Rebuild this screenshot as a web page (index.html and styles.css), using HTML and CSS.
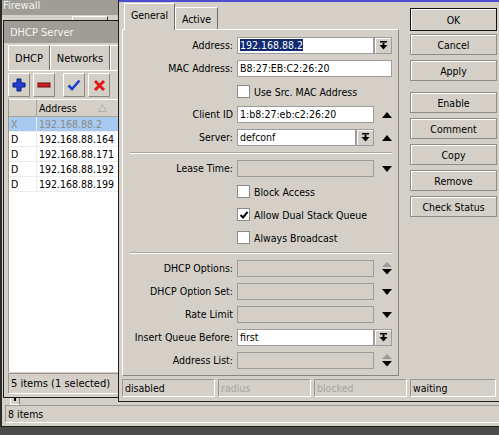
FILE: index.html
```html
<!DOCTYPE html>
<html lang="en">
<head>
    <meta charset="UTF-8">
    <meta name="viewport" content="width=device-width, initial-scale=1.0">
    <title>DHCP Lease</title>
    <link rel="stylesheet" href="styles.css">
</head>
<body>
    <div class="desktop">

        <!-- Firewall window (behind) -->
        <div class="window firewall">
            <div class="titlebar">Firewall</div>
            <div class="fw-tabs"><span class="fw-tab"></span></div>
            <div class="fw-fill"></div>
            <div class="fw-scroll"><span class="mini-btn"></span></div>
            <div class="statusbar">
                <span class="cell fw-count">8 items</span>
            </div>
        </div>

        <!-- DHCP Server window -->
        <div class="window dhcp">
            <div class="titlebar">DHCP Server</div>
            <div class="dhcp-body">
                <div class="tabs dhcp-tabs">
                    <span class="tab">DHCP</span>
                    <span class="tab">Networks</span>
                    <span class="tab">Leases</span>
                </div>
                <div class="dhcp-panel">
                    <div class="toolbar">
                        <button class="tool">
                            <svg width="14" height="14" viewBox="0 0 14 14"><path d="M5 1h4v4h4v4H9v4H5V9H1V5h4z" fill="#1f3fe0" stroke="#0d1d70" stroke-width="1"/></svg>
                        </button>
                        <button class="tool">
                            <svg width="14" height="6" viewBox="0 0 14 6"><rect x="1" y="1" width="12" height="4" fill="#d42020" stroke="#6a1010" stroke-width="1"/></svg>
                        </button>
                        <button class="tool gap">
                            <svg width="14" height="12" viewBox="0 0 14 12"><path d="M1.5 6.5l3.5 3.5 7.5-8.5" fill="none" stroke="#1f3fd0" stroke-width="2.6"/></svg>
                        </button>
                        <button class="tool">
                            <svg width="13" height="13" viewBox="0 0 13 13"><path d="M2 2l9 9M11 2l-9 9" stroke="#e01818" stroke-width="3"/></svg>
                        </button>
                    </div>
                    <div class="list">
                        <div class="list-row head">
                            <span class="col-flag"></span>
                            <span class="col-addr">Address <svg class="sort" width="9" height="8" viewBox="0 0 9 8"><path d="M4.5 0.5L8.5 7.5H0.5z" fill="none" stroke="#b0b0b0"/></svg></span>
                        </div>
                        <div class="list-row selected disabled">
                            <span class="col-flag">X</span>
                            <span class="col-addr">192.168.88.2</span>
                        </div>
                        <div class="list-row">
                            <span class="col-flag">D</span>
                            <span class="col-addr">192.168.88.164</span>
                        </div>
                        <div class="list-row">
                            <span class="col-flag">D</span>
                            <span class="col-addr">192.168.88.171</span>
                        </div>
                        <div class="list-row">
                            <span class="col-flag">D</span>
                            <span class="col-addr">192.168.88.192</span>
                        </div>
                        <div class="list-row">
                            <span class="col-flag">D</span>
                            <span class="col-addr">192.168.88.199</span>
                        </div>
                    </div>
                    <div class="cell list-status">5 items (1 selected)</div>
                </div>
            </div>
        </div>

        <!-- DHCP Lease dialog (active) -->
        <div class="window lease">
            <div class="titlebar active"></div>
            <div class="lease-body">
                <div class="lease-main">
                    <div class="tabs lease-tabs">
                        <span class="tab current">General</span>
                        <span class="tab">Active</span>
                    </div>
                    <div class="panel form">
                        <div class="lbl">Address:</div>
                        <div class="field">
                            <span class="input"><span class="sel">192.168.88.2</span></span>
                            <span class="dd"><svg width="9" height="9" viewBox="0 0 9 9"><rect x="1" y="0" width="7" height="1.5"/><rect x="3.5" y="1.5" width="2" height="2.5"/><path d="M0.5 4h8L4.5 8.5z"/></svg></span>
                        </div>

                        <div class="lbl">MAC Address:</div>
                        <div class="field"><span class="input">B8:27:EB:C2:26:20</span></div>

                        <div class="lbl"></div>
                        <div class="field check"><span class="box"></span>Use Src. MAC Address</div>

                        <div class="lbl">Client ID</div>
                        <div class="field">
                            <span class="input">1:b8:27:eb:c2:26:20</span>
                            <span class="slot"><svg width="10" height="6" viewBox="0 0 10 6"><path d="M0 6h10L5 0z"/></svg></span>
                        </div>

                        <div class="lbl">Server:</div>
                        <div class="field">
                            <span class="input">defconf</span>
                            <span class="dd"><svg width="9" height="9" viewBox="0 0 9 9"><rect x="1" y="0" width="7" height="1.5"/><rect x="3.5" y="1.5" width="2" height="2.5"/><path d="M0.5 4h8L4.5 8.5z"/></svg></span>
                            <span class="slot"><svg width="10" height="6" viewBox="0 0 10 6"><path d="M0 6h10L5 0z"/></svg></span>
                        </div>

                        <div class="sep"></div>

                        <div class="lbl">Lease Time:</div>
                        <div class="field">
                            <span class="input off"></span>
                            <span class="slot"><svg width="10" height="6" viewBox="0 0 10 6"><path d="M0 0h10L5 6z"/></svg></span>
                        </div>

                        <div class="lbl"></div>
                        <div class="field check"><span class="box"></span>Block Access</div>

                        <div class="lbl"></div>
                        <div class="field check"><span class="box"><svg width="10" height="10" viewBox="0 0 10 10"><path d="M1.5 5l2.5 2.5L8.5 2" fill="none" stroke="#000" stroke-width="2"/></svg></span>Allow Dual Stack Queue</div>

                        <div class="lbl"></div>
                        <div class="field check"><span class="box"></span>Always Broadcast</div>

                        <div class="sep"></div>

                        <div class="lbl">DHCP Options:</div>
                        <div class="field">
                            <span class="input off"></span>
                            <span class="slot"><svg width="10" height="13" viewBox="0 0 10 13"><path d="M0 5h10L5 0z" fill="#9a9a9a"/><path d="M0 7h10L5 12.5z"/></svg></span>
                        </div>

                        <div class="lbl">DHCP Option Set:</div>
                        <div class="field">
                            <span class="input off"></span>
                            <span class="slot"><svg width="10" height="6" viewBox="0 0 10 6"><path d="M0 0h10L5 6z"/></svg></span>
                        </div>

                        <div class="lbl">Rate Limit</div>
                        <div class="field">
                            <span class="input off"></span>
                            <span class="slot"><svg width="10" height="6" viewBox="0 0 10 6"><path d="M0 0h10L5 6z"/></svg></span>
                        </div>

                        <div class="lbl">Insert Queue Before:</div>
                        <div class="field">
                            <span class="input">first</span>
                            <span class="dd"><svg width="9" height="9" viewBox="0 0 9 9"><rect x="1" y="0" width="7" height="1.5"/><rect x="3.5" y="1.5" width="2" height="2.5"/><path d="M0.5 4h8L4.5 8.5z"/></svg></span>
                        </div>

                        <div class="lbl">Address List:</div>
                        <div class="field">
                            <span class="input off"></span>
                            <span class="slot"><svg width="10" height="13" viewBox="0 0 10 13"><path d="M0 5h10L5 0z" fill="#9a9a9a"/><path d="M0 7h10L5 12.5z"/></svg></span>
                        </div>
                    </div>
                </div>
                <div class="actions">
                    <button class="btn default">OK</button>
                    <button class="btn">Cancel</button>
                    <button class="btn">Apply</button>
                    <button class="btn spaced">Enable</button>
                    <button class="btn">Comment</button>
                    <button class="btn">Copy</button>
                    <button class="btn">Remove</button>
                    <button class="btn">Check Status</button>
                </div>
            </div>
            <div class="statusbar lease-status">
                <span class="cell">disabled</span>
                <span class="cell muted">radius</span>
                <span class="cell muted">blocked</span>
                <span class="cell">waiting</span>
            </div>
        </div>

    </div>
</body>
</html>
```

FILE: styles.css
```css
* {
    box-sizing: border-box;
}
body {
    margin: 0;
    background-color: #4b4b4b;
    font-family: "DejaVu Sans Condensed", "DejaVu Sans", sans-serif;
    font-size: 10.5px;
    color: #000;
    overflow: hidden;
}
.desktop {
    position: relative;
    width: 499px;
    height: 435px;
    overflow: hidden;
}
.window {
    position: absolute;
    background-color: #d4d0c8;
    border: 1px solid #1e1e1e;
}
.titlebar {
    background-color: #a09d97;
    color: #f4f4f4;
    font-size: 11px;
    display: flex;
    align-items: center;
}
.titlebar.active {
    background-color: #4e4ed2;
}

/* Firewall */
.firewall {
    left: 0;
    top: -6px;
    width: 530px;
    height: 433px;
    display: flex;
    flex-direction: column;
    border-left: 2px solid #2a2a2a;
}
.firewall .titlebar {
    height: 20px;
    padding-left: 1px;
}
.fw-tabs {
    height: 20px;
    padding: 1px 0 0 70px;
}
.fw-tab {
    display: block;
    width: 36px;
    height: 19px;
    border-top: 1px solid #fff;
    border-left: 1px solid #fff;
    border-right: 1px solid #404040;
}
.fw-fill {
    flex-grow: 1;
}
.fw-scroll {
    height: 8px;
    padding-left: 8px;
}
.mini-btn {
    display: block;
    width: 10px;
    height: 8px;
    border: 1px solid #fff;
    border-top: none;
    border-right-color: #808080;
    position: relative;
}
.mini-btn::after {
    content: "";
    position: absolute;
    left: 3px;
    top: 0;
    width: 2px;
    height: 4px;
    background: #000;
}
.statusbar {
    display: flex;
    gap: 3px;
    height: 18px;
    margin: 0 0 3px 3px;
}
.cell {
    display: flex;
    align-items: center;
    padding-left: 2px;
    border: 1px solid;
    border-color: #9a9790 #fff #fff #9a9790;
    white-space: nowrap;
}
.cell.muted {
    color: #a8a69f;
}
.fw-count {
    width: 520px;
}

/* DHCP Server */
.dhcp {
    left: 3px;
    top: 20px;
    width: 160px;
    height: 378px;
}
.dhcp .titlebar {
    height: 22px;
    padding-left: 6px;
}
.dhcp-body {
    padding: 2px 0 0 4px;
}
.tabs {
    display: flex;
    align-items: flex-end;
}
.tab {
    display: flex;
    align-items: center;
    justify-content: center;
    border-top: 1px solid #fff;
    border-left: 1px solid #fff;
    border-right: 1px solid #6e6e6e;
    white-space: nowrap;
}
.dhcp-tabs {
    height: 25px;
}
.dhcp-tabs .tab {
    height: 25px;
    font-size: 11px;
}
.dhcp-tabs .tab:nth-child(1) {
    width: 42px;
}
.dhcp-tabs .tab:nth-child(2) {
    width: 60px;
}
.dhcp-tabs .tab:nth-child(3) {
    width: 50px;
}
.dhcp-panel {
    border-top: 1px solid #fff;
    padding-top: 2px;
}
.toolbar {
    display: flex;
    gap: 3px;
    height: 24px;
}
.tool {
    width: 22px;
    height: 24px;
    padding: 0;
    display: flex;
    align-items: center;
    justify-content: center;
    background-color: #d4d0c8;
    border: 1px solid;
    border-color: #fff #8a8780 #8a8780 #fff;
}
.tool.gap {
    margin-left: 5px;
}
.list {
    margin-top: 2px;
    height: 273px;
    background-color: #fff;
    border-left: 1px solid #9a9790;
}
.list-row {
    display: flex;
    height: 15px;
    align-items: center;
    border-bottom: 1px solid #ececec;
}
.list-row.head {
    height: 18px;
    background-color: #d4d0c8;
    border-top: 1px solid #fff;
    border-bottom: 1px solid #a8a59e;
}
.col-flag {
    width: 28px;
    height: 100%;
    display: flex;
    align-items: center;
    padding-left: 2px;
    border-right: 1px solid #ececec;
}
.head .col-flag {
    border-right: 1px solid #a8a59e;
}
.col-addr {
    flex-grow: 1;
    padding-left: 2px;
    display: flex;
    align-items: center;
}
.sort {
    margin-left: 21px;
}
.list-row.selected {
    background-color: #a6caf0;
}
.list-row.disabled {
    color: #8a8a8a;
}
.list-status {
    margin-top: 1px;
    height: 21px;
    width: 150px;
    font-size: 11px;
}

/* DHCP Lease dialog */
.lease {
    left: 118px;
    top: -22px;
    width: 400px;
}
.lease .titlebar {
    height: 23px;
}
.lease-body {
    display: flex;
    padding: 1px 0 0 3px;
}
.lease-main {
    width: 277px;
}
.lease-tabs {
    height: 26px;
    padding-left: 2px;
    position: relative;
    z-index: 1;
}
.lease-tabs .tab {
    height: 22px;
    width: 43px;
}
.lease-tabs .tab.current {
    height: 27px;
    width: 51px;
    margin-bottom: -1px;
    background-color: #d4d0c8;
    padding-bottom: 4px;
}
.panel {
    height: 347px;
    border: 1px solid;
    border-color: #fff #8a8780 #8a8780 #fff;
}
.form {
    display: grid;
    grid-template-columns: 110px 155px;
    column-gap: 4px;
    row-gap: 6px;
    align-content: start;
    padding-top: 7px;
}
.lbl {
    height: 17px;
    line-height: 17px;
    text-align: right;
    white-space: nowrap;
}
.field {
    display: flex;
    height: 17px;
}
.input {
    flex-grow: 1;
    height: 17px;
    line-height: 15px;
    padding-left: 2px;
    background-color: #fff;
    border: 1px solid #9c9c9c;
    white-space: nowrap;
    overflow: hidden;
}
.input.off {
    background-color: #d4d0c8;
}
.sel {
    background-color: #0f2a6e;
    color: #fff;
}
.dd {
    width: 18px;
    height: 17px;
    display: flex;
    align-items: center;
    justify-content: center;
    border: 1px solid #9c9c9c;
    box-shadow: inset 1px 1px 0 #fff;
}
.slot {
    width: 18px;
    display: flex;
    align-items: center;
    justify-content: flex-end;
}
.check {
    align-items: center;
    gap: 4px;
}
.box {
    width: 13px;
    height: 13px;
    background-color: #fff;
    border: 1px solid #8a8a8a;
    display: flex;
    align-items: center;
    justify-content: center;
}
.sep {
    grid-column: 1 / -1;
    height: 2px;
    margin-left: 7px;
    border-top: 1px solid #a8a59e;
    border-bottom: 1px solid #fff;
}
.actions {
    display: flex;
    flex-direction: column;
    gap: 5px;
    width: 87px;
    margin-left: 11px;
    padding-top: 5px;
}
.btn {
    height: 21px;
    padding: 0;
    font-family: inherit;
    font-size: 10.5px;
    color: #000;
    background-color: #d4d0c8;
    border: 1px solid #8f8c85;
    box-shadow: inset 1px 1px 0 #fff;
}
.btn.default {
    border-color: #111;
    height: 23px;
    margin-bottom: -2px;
}
.btn.spaced {
    margin-top: 6px;
}
.lease-status {
    margin: 3px 0 4px 3px;
}
.lease-status .cell {
    width: 93px;
}
.lease-status .cell:last-child {
    width: 86px;
}
```
